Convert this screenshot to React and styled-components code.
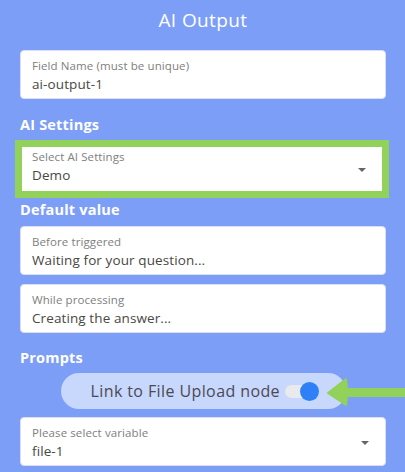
import styled, { createGlobalStyle } from "styled-components";

const GlobalStyle = createGlobalStyle`
  body {
    margin: 0;
    background: #7c9ef7;
    font-family: "Open Sans", "DejaVu Sans", sans-serif;
  }
`;

const Page = styled.div`
  position: relative;
  width: 405px;
  height: 472px;
  box-sizing: border-box;
  padding: 8px 19px 0 20px;
  background: #7c9ef7;
  overflow: hidden;
  display: flex;
  flex-direction: column;
`;

const Title = styled.h1`
  margin: 0 0 18px;
  height: 24px;
  line-height: 24px;
  text-align: center;
  color: #fff;
  font-size: 19px;
  font-weight: 500;
  letter-spacing: 0.4px;
`;

const SectionTitle = styled.h2`
  margin: ${(p) => p.$top}px 0 ${(p) => p.$bottom}px;
  height: 20px;
  line-height: 20px;
  color: #fff;
  font-size: 14.5px;
  font-weight: 700;
  letter-spacing: 0.2px;
`;

const Field = styled.div`
  position: relative;
  box-sizing: border-box;
  height: ${(p) => (p.$compact ? 44 : 49)}px;
  margin-bottom: ${(p) => p.$gap || 0}px;
  padding: ${(p) => (p.$compact ? "3px 10px 0" : "8px 11px 0")};
  background: #fff;
  border: ${(p) => (p.$compact ? "none" : "1px solid #d9dff0")};
  border-radius: ${(p) => (p.$compact ? 0 : 4)}px;
  display: flex;
  flex-direction: column;
`;

const Label = styled.span`
  height: 14px;
  line-height: 14px;
  font-size: 11.5px;
  color: #808080;
  letter-spacing: 0.1px;
`;

const Value = styled.span`
  margin-top: 2px;
  height: 18px;
  line-height: 18px;
  font-size: 13.5px;
  color: #4a4744;
  letter-spacing: 0.1px;
`;

const Caret = styled.span`
  position: absolute;
  right: 16px;
  top: 50%;
  margin-top: -1px;
  width: 0;
  height: 0;
  border-left: 4.5px solid transparent;
  border-right: 4.5px solid transparent;
  border-top: 4.5px solid #666;
`;

const Highlight = styled.div`
  margin: 0 -3px 0 -5px;
  padding: 7px;
  background: #92d15a;
`;

const PillRow = styled.div`
  display: flex;
  justify-content: center;
  margin-bottom: 8px;
`;

const Pill = styled.div`
  width: 285px;
  height: 36px;
  box-sizing: border-box;
  padding: 0 27px 0 30px;
  border-radius: 18px;
  background: #c8d7fc;
  display: flex;
  align-items: center;
  justify-content: space-between;
`;

const PillText = styled.span`
  font-size: 16px;
  color: #4a4a55;
  letter-spacing: 0.4px;
`;

const Track = styled.span`
  position: relative;
  width: 34px;
  height: 13px;
  border-radius: 7px;
  background: #e9e9ee;
`;

const Thumb = styled.span`
  position: absolute;
  right: 0;
  top: 50%;
  width: 19px;
  height: 19px;
  margin-top: -9.5px;
  border-radius: 50%;
  background: #2f80f6;
`;

const Arrow = styled.svg`
  position: absolute;
  left: 326px;
  top: 377px;
`;

const SelectField = ({ label, value, compact, gap }) => (
  <Field $compact={compact} $gap={gap}>
    <Label>{label}</Label>
    <Value>{value}</Value>
    <Caret />
  </Field>
);

const TextField = ({ label, value, gap }) => (
  <Field $gap={gap}>
    <Label>{label}</Label>
    <Value>{value}</Value>
  </Field>
);

const App = () => (
  <>
    <GlobalStyle />
    <Page>
      <Title>AI Output</Title>
      <TextField label="Field Name (must be unique)" value="ai-output-1" />

      <SectionTitle $top={16} $bottom={5}>AI Settings</SectionTitle>
      <Highlight>
        <SelectField compact label="Select AI Settings" value="Demo" />
      </Highlight>

      <SectionTitle $top={2} $bottom={6}>Default value</SectionTitle>
      <TextField label="Before triggered" value="Waiting for your question..." gap={9} />
      <TextField label="While processing" value="Creating the answer..." />

      <SectionTitle $top={15} $bottom={5}>Prompts</SectionTitle>
      <PillRow>
        <Pill>
          <PillText>Link to File Upload node</PillText>
          <Track>
            <Thumb />
          </Track>
        </Pill>
      </PillRow>
      <SelectField label="Please select variable" value="file-1" />

      <Arrow width="79" height="30" viewBox="0 0 79 30">
        <path
          d="M2 16 L20 2 L21 12 L79 12 L79 19 L21 19 L20 28 Z"
          fill="#92d15a"
          stroke="#92d15a"
          strokeWidth="2"
          strokeLinejoin="round"
        />
      </Arrow>
    </Page>
  </>
);

export default App;
